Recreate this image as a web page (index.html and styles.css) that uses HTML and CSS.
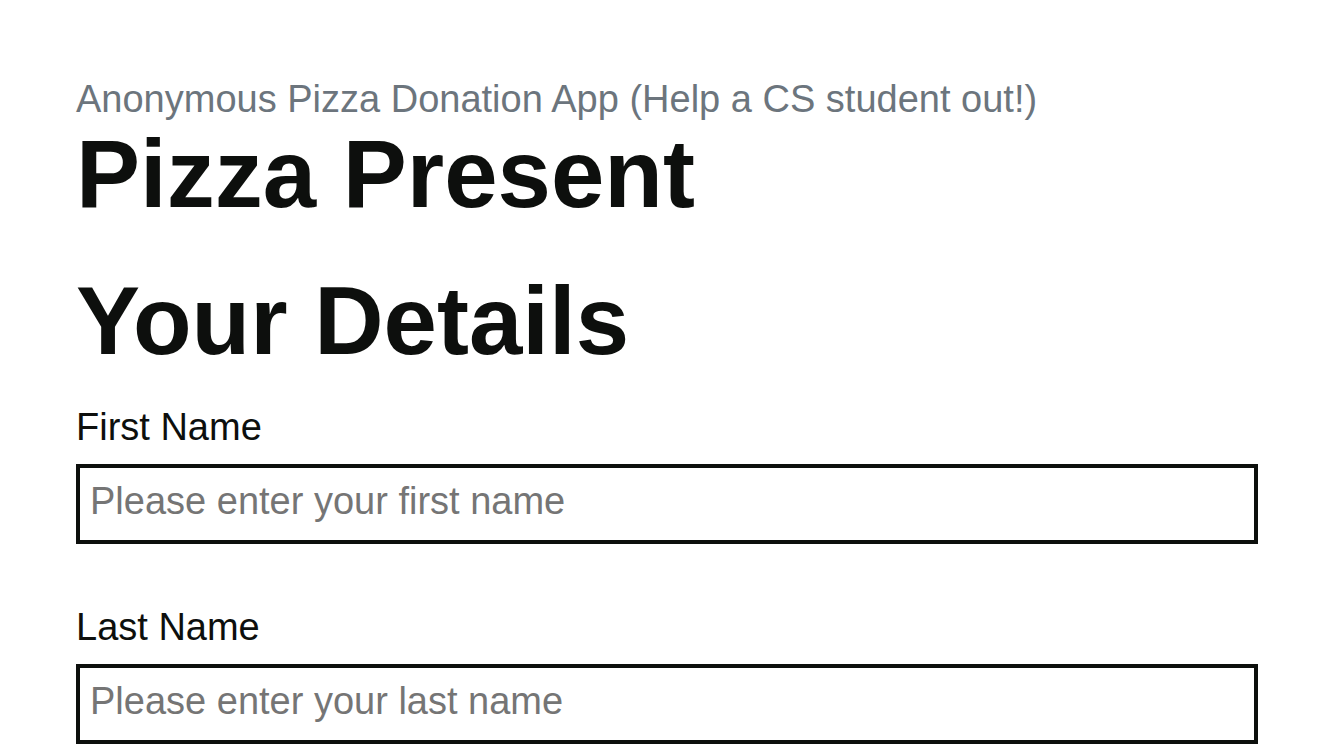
FILE: index.html
```html
<!DOCTYPE html>
<html lang="en">
<head>
<meta charset="utf-8">
<title>Pizza Present</title>
<link rel="stylesheet" href="styles.css">
</head>
<body>
<main class="page">
  <header class="masthead">
    <p class="tagline">Anonymous Pizza Donation App (Help a CS student out!)</p>
    <h1 class="title">Pizza Present</h1>
  </header>
  <section class="details">
    <h2 class="section-title">Your Details</h2>
    <div class="field">
      <label class="field-label" for="first">First Name</label>
      <input class="field-input" id="first" type="text" placeholder="Please enter your first name">
    </div>
    <div class="field">
      <label class="field-label" for="last">Last Name</label>
      <input class="field-input" id="last" type="text" placeholder="Please enter your last name">
    </div>
  </section>
</main>
</body>
</html>
```
FILE: styles.css
```css
html, body {
  margin: 0;
  padding: 0;
  background: #ffffff;
}
body {
  font-family: "Liberation Sans", Arial, sans-serif;
  color: #0d0f0d;
}
.page {
  width: 1182px;
  padding: 77px 0 0 76px;
}
.masthead {
  display: flex;
  flex-direction: column;
}
.tagline {
  margin: 0;
  font-size: 38px;
  line-height: 44px;
  color: #6c757d;
}
.title {
  margin: 5px 0 0;
  font-size: 96px;
  line-height: 96px;
  font-weight: 700;
}
.section-title {
  margin: 51px 0 0;
  font-size: 96px;
  line-height: 96px;
  font-weight: 700;
}
.field {
  display: flex;
  flex-direction: column;
  margin-top: 36px;
}
.field + .field {
  margin-top: 61px;
}
.field-label {
  font-size: 38px;
  line-height: 44px;
  margin-bottom: 15px;
}
.field-input {
  box-sizing: border-box;
  width: 100%;
  height: 80px;
  margin: 0;
  border: 4px solid #0d0f0d;
  border-radius: 0;
  padding: 0 10px 6px;
  font-family: "Liberation Sans", Arial, sans-serif;
  font-size: 38px;
  line-height: 66px;
  color: #0d0f0d;
  background: #ffffff;
  outline: none;
}
.field-input::placeholder {
  color: #757575;
  opacity: 1;
}
```
